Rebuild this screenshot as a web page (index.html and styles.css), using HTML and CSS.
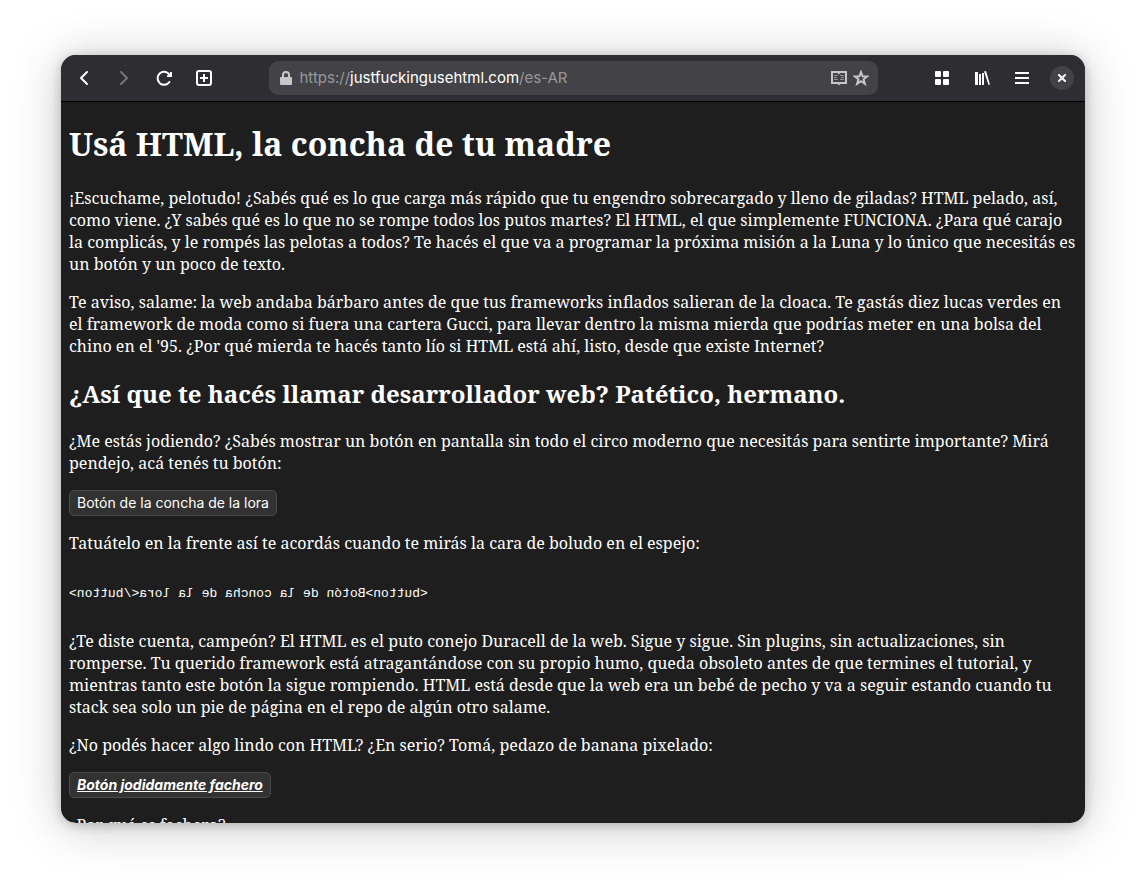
FILE: index.html
```html
<!DOCTYPE html>
<html lang="es-AR">
<head>
    <meta charset="UTF-8">
    <meta name="viewport" content="width=device-width, initial-scale=1.0">
    <title>Usá HTML, la concha de tu madre</title>
    <link rel="stylesheet" href="styles.css">
</head>
<body>
    <div class="window">
        <header class="toolbar">
            <nav class="nav-buttons">
                <button type="button" class="icon-button" aria-label="Back">
                    <svg width="16" height="16" viewBox="0 0 16 16"><path d="M11 2L5 8l6 6" fill="none" stroke="currentColor" stroke-width="2" stroke-linecap="round" stroke-linejoin="round"/></svg>
                </button>
                <button type="button" class="icon-button" aria-label="Forward" disabled>
                    <svg width="16" height="16" viewBox="0 0 16 16"><path d="M5 2l6 6-6 6" fill="none" stroke="currentColor" stroke-width="2" stroke-linecap="round" stroke-linejoin="round"/></svg>
                </button>
                <button type="button" class="icon-button" aria-label="Reload">
                    <svg width="16" height="16" viewBox="0 0 16 16"><path d="M13.4 12A6.5 6.5 0 1 1 13.3 4.4" fill="none" stroke="currentColor" stroke-width="2" stroke-linecap="round"/><path d="M14 2h1.5q.5 0 .5.5V7h-5V5.500l3-1z" fill="currentColor"/></svg>
                </button>
                <button type="button" class="icon-button" aria-label="New tab">
                    <svg width="16" height="16" viewBox="0 0 16 16"><rect x="1" y="1" width="14" height="14" rx="2" fill="none" stroke="currentColor" stroke-width="2"/><path d="M8 4v8M4 8h8" stroke="currentColor" stroke-width="2"/></svg>
                </button>
            </nav>
            <div class="address">
                <svg width="12" height="14" viewBox="0 0 12 14"><path d="M3 7V4a3 3 0 0 1 6 0v3" fill="none" stroke="currentColor" stroke-width="2"/><rect y="6" width="12" height="8" rx="1" fill="currentColor"/></svg>
                <a class="url" href="#">https://<span class="host">justfuckingusehtml.com</span>/es-AR</a>
                <svg width="16" height="14" viewBox="0 0 16 14"><path d="M1 1h6l1 1 1-1h6v11H9l-1 1-1-1H1z" fill="none" stroke="currentColor" stroke-width="2"/><path d="M3 4.500h4M3 6.500h3M3 8.500h4M9 4.500h4M10 6.500h3M9 8.500h4" stroke="currentColor" opacity="0.6"/></svg>
                <svg width="16" height="16" viewBox="0 0 16 16"><path d="M8 2l1.6 4.300 4.600.1-3.600 2.900 1.300 4.500L8 11.200l-3.900 2.600 1.300-4.500L1.800 6.400l4.600-.1z" fill="none" stroke="currentColor" stroke-width="2"/></svg>
            </div>
            <div class="window-buttons">
                <button type="button" class="icon-button" aria-label="Tabs">
                    <svg width="14" height="14" viewBox="0 0 14 14" fill="currentColor"><rect width="6" height="6" rx="1"/><rect x="8" width="6" height="6" rx="1"/><rect y="8" width="6" height="6" rx="1"/><rect x="8" y="8" width="6" height="6" rx="1"/></svg>
                </button>
                <button type="button" class="icon-button" aria-label="Library">
                    <svg width="16" height="14" viewBox="0 0 16 14" fill="currentColor"><path d="M1 1h3v13H1zM5 3h2v11H5zM8 2h2v12H8zM10 .5l2-.5 4 13.500-1.500.5z"/></svg>
                </button>
                <button type="button" class="icon-button" aria-label="Menu">
                    <svg width="14" height="12" viewBox="0 0 14 12" fill="currentColor"><path d="M0 0h14v2H0zM0 5h14v2H0zM0 10h14v2H0z"/></svg>
                </button>
                <button type="button" class="icon-button close" aria-label="Close">
                    <svg width="8" height="8" viewBox="0 0 8 8"><path d="M1 1l6 6M7 1L1 7" stroke="currentColor" stroke-width="2" stroke-linecap="square"/></svg>
                </button>
            </div>
        </header>
        <main class="page">
            <h1>Usá HTML, la concha de tu madre</h1>
            <p>¡Escuchame, pelotudo! ¿Sabés qué es lo que carga más rápido que tu engendro sobrecargado y lleno de giladas? HTML pelado, así, como viene. ¿Y sabés qué es lo que no se rompe todos los putos martes? El HTML, el que simplemente FUNCIONA. ¿Para qué carajo la complicás, y le rompés las pelotas a todos? Te hacés el que va a programar la próxima misión a la Luna y lo único que necesitás es un botón y un poco de texto.</p>
            <p>Te aviso, salame: la web andaba bárbaro antes de que tus frameworks inflados salieran de la cloaca. Te gastás diez lucas verdes en el framework de moda como si fuera una cartera Gucci, para llevar dentro la misma mierda que podrías meter en una bolsa del chino en el '95. ¿Por qué mierda te hacés tanto lío si HTML está ahí, listo, desde que existe Internet?</p>
            <h2>¿Así que te hacés llamar desarrollador web? Patético, hermano.</h2>
            <p>¿Me estás jodiendo? ¿Sabés mostrar un botón en pantalla sin todo el circo moderno que necesitás para sentirte importante? Mirá pendejo, acá tenés tu botón:</p>
            <button type="button" class="demo">Botón de la concha de la lora</button>
            <p>Tatuátelo en la frente así te acordás cuando te mirás la cara de boludo en el espejo:</p>
            <pre class="mirror">&lt;button&gt;Botón de la concha de la lora&lt;/button&gt;</pre>
            <p>¿Te diste cuenta, campeón? El HTML es el puto conejo Duracell de la web. Sigue y sigue. Sin plugins, sin actualizaciones, sin romperse. Tu querido framework está atragantándose con su propio humo, queda obsoleto antes de que termines el tutorial, y mientras tanto este botón la sigue rompiendo. HTML está desde que la web era un bebé de pecho y va a seguir estando cuando tu stack sea solo un pie de página en el repo de algún otro salame.</p>
            <p>¿No podés hacer algo lindo con HTML? ¿En serio? Tomá, pedazo de banana pixelado:</p>
            <button type="button" class="demo fancy">Botón jodidamente fachero</button>
            <p>¿Por qué es fachero?</p>
        </main>
    </div>
</body>
</html>
```
FILE: styles.css
```css
* {
    box-sizing: border-box;
}
body {
    display: flex;
    height: 100vh;
    margin: 0;
    padding: 55px 61px 67px;
    background: #fff;
}
.window {
    display: flex;
    flex-direction: column;
    flex: 1;
    min-width: 0;
    overflow: hidden;
    border-radius: 15px;
    background: #1e1e1e;
    color: #fff;
    box-shadow: 0 2px 12px rgba(0, 0, 0, 0.22), 0 4px 48px rgba(0, 0, 0, 0.22);
}
.toolbar {
    display: flex;
    flex: none;
    align-items: center;
    justify-content: space-between;
    height: 47px;
    padding: 0 6px;
    background: #2e2e32;
    border-bottom: 1px solid #000;
}
.nav-buttons,
.window-buttons {
    display: flex;
    gap: 6px;
}
.icon-button {
    display: flex;
    align-items: center;
    justify-content: center;
    width: 34px;
    height: 34px;
    padding: 0;
    border: none;
    border-radius: 8px;
    background: none;
    color: #fff;
}
.icon-button:disabled {
    color: #77777a;
}
.close {
    width: 24px;
    height: 24px;
    margin: 5px;
    border-radius: 50%;
    background: #434347;
}
.address {
    display: flex;
    align-items: center;
    gap: 6px;
    width: 61%;
    max-width: 609px;
    height: 34px;
    padding: 0 9px 0 11px;
    border-radius: 9px;
    background: #434347;
    color: #c7c7c8;
}
.url {
    flex: 1;
    margin-left: 2px;
    padding-bottom: 2px;
    font: 15px Inter, sans-serif;
    color: #98989a;
    text-decoration: none;
}
.host {
    color: #fff;
}
.page {
    flex: 1;
    min-height: 0;
    overflow: hidden;
    padding: 0 8px;
    font: 16px/22px "Noto Serif", "DejaVu Serif", serif;
}
h1 {
    margin: 20px 0 21px;
    font-size: 32px;
    line-height: 44px;
}
h2 {
    margin: 20px 0;
    font-size: 24px;
    line-height: 33px;
}
p {
    margin: 16px 0;
}
.demo {
    display: block;
    height: 26px;
    padding: 0 7px 2px;
    border: 1px solid #4a4a4a;
    border-radius: 5px;
    background: #323232;
    color: #fff;
    font: 14px Inter, sans-serif;
}
.fancy {
    font-weight: bold;
    font-style: italic;
    text-decoration: underline;
}
.mirror {
    width: max-content;
    margin: 31px 0 27px;
    font: 13px/18px "Liberation Mono", monospace;
    transform: scaleX(-1);
}
```
